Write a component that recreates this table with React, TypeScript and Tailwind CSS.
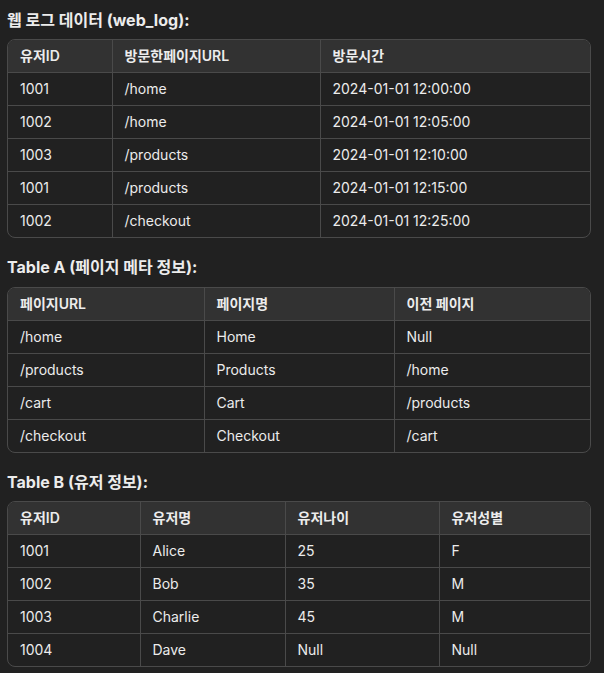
const font = '"Inter", "Noto Sans CJK KR", sans-serif'

interface TableProps {
  widths: string[]
  head: string[]
  rows: string[][]
}

function DataTable({ widths, head, rows }: TableProps) {
  return (
    <div className="rounded-lg border border-[#4a4a4a] overflow-hidden">
      <table className="w-full border-collapse text-[14px] text-[#ececec]">
        <thead>
          <tr className="bg-[#323232]">
            {head.map((h, i) => (
              <th
                key={h}
                className={`${widths[i]} h-[32px] px-[12px] text-left font-semibold ${i < head.length - 1 ? 'border-r border-[#4a4a4a]' : ''} border-b border-[#4a4a4a]`}
              >
                {h}
              </th>
            ))}
          </tr>
        </thead>
        <tbody>
          {rows.map((r, ri) => (
            <tr key={ri}>
              {r.map((c, ci) => (
                <td
                  key={ci}
                  className={`h-[33px] px-[12px] font-normal ${ci < r.length - 1 ? 'border-r border-[#4a4a4a]' : ''} ${ri < rows.length - 1 ? 'border-b border-[#4a4a4a]' : ''}`}
                >
                  {c}
                </td>
              ))}
            </tr>
          ))}
        </tbody>
      </table>
    </div>
  )
}

export default function App() {
  return (
    <div className="min-h-[673px] bg-[#212121] px-[7px] pt-[8px] pb-[6px] pr-[13px]" style={{ fontFamily: font }}>
      <h3 className="text-[16px] leading-[24px] font-bold text-[#ececec] mb-[7px]">웹 로그 데이터 (web_log):</h3>
      <DataTable
        widths={['w-[104px]', 'w-[208px]', '']}
        head={['유저ID', '방문한페이지URL', '방문시간']}
        rows={[
          ['1001', '/home', '2024-01-01 12:00:00'],
          ['1002', '/home', '2024-01-01 12:05:00'],
          ['1003', '/products', '2024-01-01 12:10:00'],
          ['1001', '/products', '2024-01-01 12:15:00'],
          ['1002', '/checkout', '2024-01-01 12:25:00'],
        ]}
      />
      <h3 className="mt-[17px] text-[16px] leading-[24px] font-bold text-[#ececec] mb-[8px]">Table A (페이지 메타 정보):</h3>
      <DataTable
        widths={['w-[196px]', 'w-[190px]', '']}
        head={['페이지URL', '페이지명', '이전 페이지']}
        rows={[
          ['/home', 'Home', 'Null'],
          ['/products', 'Products', '/home'],
          ['/cart', 'Cart', '/products'],
          ['/checkout', 'Checkout', '/cart'],
        ]}
      />
      <h3 className="mt-[17px] text-[16px] leading-[24px] font-bold text-[#ececec] mb-[7px]">Table B (유저 정보):</h3>
      <DataTable
        widths={['w-[132px]', 'w-[145px]', 'w-[154px]', '']}
        head={['유저ID', '유저명', '유저나이', '유저성별']}
        rows={[
          ['1001', 'Alice', '25', 'F'],
          ['1002', 'Bob', '35', 'M'],
          ['1003', 'Charlie', '45', 'M'],
          ['1004', 'Dave', 'Null', 'Null'],
        ]}
      />
    </div>
  )
}
